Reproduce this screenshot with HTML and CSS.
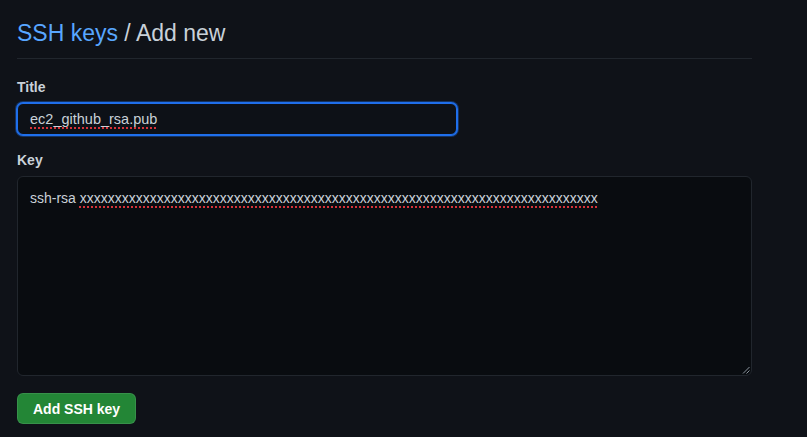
FILE: index.html
```html
<!DOCTYPE html>
<html>
<head>
<meta charset="utf-8">
<link rel="stylesheet" href="styles.css">
</head>
<body>
<main class="page">
  <h2 class="subhead"><a class="crumb" href="#">SSH keys</a> / Add new</h2>
  <form class="form">
    <div class="group">
      <label class="label">Title</label>
      <div class="input focused"><span class="typo">ec2_github_rsa.pub</span></div>
    </div>
    <div class="group">
      <label class="label">Key</label>
      <div class="textarea">ssh-rsa <span class="typo">xxxxxxxxxxxxxxxxxxxxxxxxxxxxxxxxxxxxxxxxxxxxxxxxxxxxxxxxxxxxxxxxxxxxxxxxxx</span>
        <svg class="grip" width="8" height="8" viewBox="0 0 8 8"><path d="M1 7.5L7.5 1M4.5 7.5L7.5 4.5" stroke="#8b949e" stroke-width="1" fill="none"/></svg>
      </div>
    </div>
    <div class="actions"><button type="button" class="btn">Add SSH key</button></div>
  </form>
</main>
</body>
</html>
```
FILE: styles.css
```css
html, body {
  margin: 0;
  background: #0f1218;
}
body {
  font-family: "Liberation Sans", Arial, sans-serif;
  color: #c9d1d9;
  font-size: 14px;
}
.page {
  width: 735px;
  padding: 15px 0 0 17px;
}
.subhead {
  margin: 0;
  font-size: 23px;
  font-weight: 400;
  line-height: 36px;
  padding-bottom: 7px;
  border-bottom: 1px solid #21262d;
  color: #c9d1d9;
}
.crumb {
  color: #58a6ff;
  text-decoration: none;
}
.form {
  display: flex;
  flex-direction: column;
  padding-top: 18px;
}
.group {
  display: flex;
  flex-direction: column;
  gap: 6px;
  margin-bottom: 15px;
}
.label {
  font-weight: 700;
  font-size: 14px;
  line-height: 20px;
  color: #c9d1d9;
}
.input {
  box-sizing: border-box;
  width: 440px;
  height: 32px;
  padding: 0 12px;
  display: flex;
  align-items: center;
  background: #0d1117;
  border: 1px solid #30363d;
  border-radius: 6px;
  color: #c9d1d9;
  font-size: 14.5px;
}
.input.focused {
  border-color: #1f6feb;
  box-shadow: 0 0 0 1px #1f6feb, 0 0 0 2px rgba(31,111,235,0.35);
}
.textarea {
  position: relative;
  box-sizing: border-box;
  width: 735px;
  height: 200px;
  padding: 11px 12px;
  background: #090c10;
  border: 1px solid #21262d;
  border-radius: 6px;
  line-height: 20px;
  color: #c9d1d9;
}
.typo {
  text-decoration: underline dotted #d6333a;
  text-decoration-thickness: 2px;
  text-underline-offset: 3px;
}
.grip {
  position: absolute;
  right: 1px;
  bottom: 1px;
}
.actions {
  padding-top: 2px;
}
.btn {
  font-family: inherit;
  font-size: 14px;
  font-weight: 700;
  color: #ffffff;
  background: #238636;
  border: 1px solid rgba(240,246,252,0.1);
  border-radius: 6px;
  height: 31px;
  padding: 0 15px;
  white-space: nowrap;
}
```
